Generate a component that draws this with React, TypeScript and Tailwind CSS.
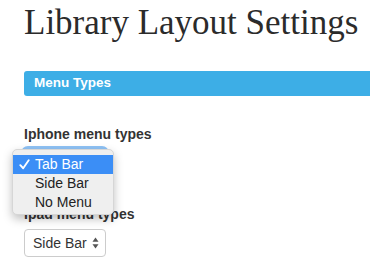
// Library layout settings page with an open select menu
const CheckIcon = () => (
  <svg width="11" height="11" viewBox="0 0 10 10" fill="none">
    <path d="M1.2 5.6 L3.8 8.4 L8.8 1.2" stroke="white" strokeWidth="1.7" strokeLinecap="round" strokeLinejoin="round" />
  </svg>
);

const UpDownIcon = () => (
  <svg width="7" height="12" viewBox="0 0 7 12">
    <path d="M3.5 0.5 L6.5 4.8 L0.5 4.8 Z" fill="#555" />
    <path d="M3.5 11.5 L6.5 7.2 L0.5 7.2 Z" fill="#555" />
  </svg>
);

const menuItems = ["Tab Bar", "Side Bar", "No Menu"];

const FakeSelect = ({ value, focused }: { value: string; focused?: boolean }) => (
  <div
    className={`flex h-[28px] w-[82px] items-center justify-between rounded-[4px] border border-[#cccccc] bg-white pl-[8px] pr-[6px] text-[14px] text-[#333] ${
      focused ? "shadow-[0_0_0_3px_#8ec2f5]" : ""
    }`}
  >
    <span>{value}</span>
    <UpDownIcon />
  </div>
);

export default function App() {
  return (
    <div className="min-h-[268px] w-[370px] overflow-hidden bg-white pl-[24px] font-['Liberation_Sans',Arial,sans-serif] text-[#333]">
      <h1 className="pt-[3px] font-['Liberation_Serif',Georgia,serif] text-[35px] leading-[40px] whitespace-nowrap text-[#2b2b2b]">
        Library Layout Settings
      </h1>

      <div className="mt-[28px] flex h-[25px] w-[360px] items-center rounded-l-[3px] bg-[#3daee6] pl-[10px] text-[13.5px] font-bold text-white">
        Menu Types
      </div>

      <div className="mt-[28px] text-[14px] leading-[20px] font-bold">Iphone menu types</div>
      <div className="relative mt-[5px] w-[82px]">
        <FakeSelect value="Tab Bar" focused />
        <div className="absolute -left-[12px] top-0 z-10 w-[102px] rounded-[5px] border border-[#d6d6d6] bg-[#efefef] pt-[5px] pb-[2px] text-[14px] text-[#222] shadow-[0_4px_10px_rgba(0,0,0,0.25)]">
          {menuItems.map((item, i) => (
            <div
              key={item}
              className={`flex h-[19px] items-center ${i === 0 ? "bg-[#3b8ef6] text-white" : ""}`}
            >
              <span className="flex w-[22px] justify-center pl-[1px]">{i === 0 && <CheckIcon />}</span>
              <span>{item}</span>
            </div>
          ))}
        </div>
      </div>

      <div className="mt-[27px] text-[14px] leading-[20px] font-bold">Ipad menu types</div>
      <div className="mt-[5px]">
        <FakeSelect value="Side Bar" />
      </div>
    </div>
  );
}
